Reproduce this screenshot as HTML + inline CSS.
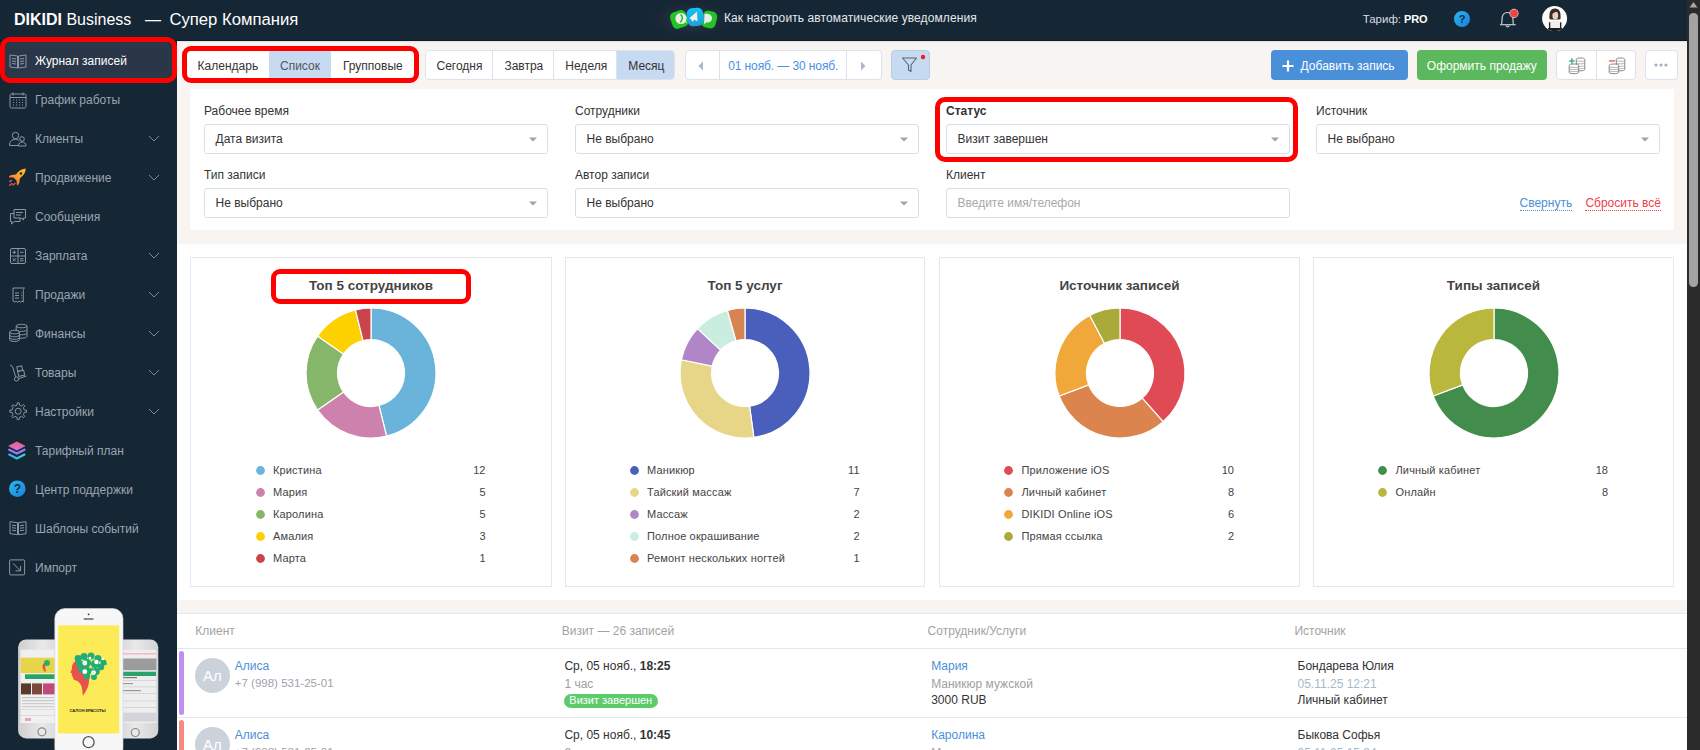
<!DOCTYPE html><html><head><meta charset="utf-8"><style>
html,body{margin:0;padding:0}
body{width:1700px;height:750px;overflow:hidden;position:relative;background:#f7f4f1;font-family:"Liberation Sans",sans-serif}
.t{position:absolute;white-space:nowrap}
.b{position:absolute;box-sizing:border-box}
svg{position:absolute;overflow:visible}
</style></head><body>
<div class="b" style="left:177px;top:41px;width:1510px;height:2px;background:linear-gradient(#e4e2e0,#f5f2ef)"></div>
<div class="b" style="left:0px;top:0px;width:1687px;height:41px;background:#152634;border-bottom:1px solid #0c1926"></div>
<div class="b" style="left:0px;top:41px;width:177px;height:709px;background:#152634"></div>
<div class="b" style="left:177px;top:244px;width:1510px;height:356px;background:#fefefe"></div>
<div class="b" style="left:177px;top:613px;width:1510px;height:137px;background:#fff;border-top:1px solid #e3e7ee"></div>
<div class="b" style="left:1687px;top:0px;width:13px;height:750px;background:#2b2b2b"></div>
<div class="b" style="left:1689.2px;top:13px;width:8.4px;height:274px;background:#a3a3a3;border-radius:4.2px"></div>
<svg style="left:1689px;top:0.5px" width="9" height="7"><path d="M0.5 6.5 L4.5 1 L8.5 6.5 Z" fill="#a8a8a8"/></svg>
<div class="t " style="left:14.00px;top:12.46px;font-size:16px;line-height:16px;color:#fff;font-weight:400;"><b>DIKIDI</b> Business</div>
<div class="t " style="left:145.00px;top:12.46px;font-size:16px;line-height:16px;color:#fff;font-weight:400;letter-spacing:0">—</div>
<div class="t " style="left:169.40px;top:11.86px;font-size:16.7px;line-height:16.7px;color:#fff;font-weight:400;">Супер Компания</div>
<svg style="left:620px;top:0px" width="140" height="40" viewBox="620 0 140 40">
<defs><radialGradient id="glow" cx="50%" cy="50%" r="50%"><stop offset="0" stop-color="#3a4654" stop-opacity="1"/><stop offset="1" stop-color="#172433" stop-opacity="0"/></radialGradient>
<linearGradient id="tg" x1="0" y1="0" x2="0" y2="1"><stop offset="0" stop-color="#12c2f8"/><stop offset="1" stop-color="#1f9fd8"/></linearGradient></defs>
<ellipse cx="692" cy="19" rx="46" ry="21" fill="url(#glow)"/>
<rect x="671" y="11" width="16.5" height="17" rx="5" fill="#22c322" transform="rotate(-18 679 19.5)"/>
<circle cx="681" cy="18.5" r="5.6" fill="#eeeeee"/><path d="M685 22 L687.3 23.3 L684.5 19.5 Z" fill="#eeeeee"/>
<path d="M681 15 C682.7 16 683 19.5 680.5 22" fill="none" stroke="#22c322" stroke-width="1.6" stroke-linecap="round"/>
<rect x="702" y="11" width="14.5" height="17" rx="5" fill="#22c322" transform="rotate(14 709 19.5)"/>
<path d="M704.5 14 C709 13 712 15 712 18.5 C712 21.5 709 23 706 22.5 L704 24.5 Z" fill="#ececec"/>
<rect x="687" y="8" width="16.5" height="18" rx="5.5" fill="url(#tg)" transform="rotate(-6 695 17)"/>
<path d="M689.5 18 L697 11.5 L697.5 21.5 L694 19.5 L693 22 Z" fill="#eeeeee"/>
</svg>
<div class="t " style="left:724.00px;top:11.84px;font-size:12px;line-height:12px;color:#e4e8ee;font-weight:400;letter-spacing:0.1px">Как настроить автоматические уведомления</div>
<div class="t " style="left:1362.70px;top:13.57px;font-size:11.5px;line-height:11.5px;color:#d9dde3;font-weight:400;">Тариф:</div>
<div class="t " style="left:1404.00px;top:13.99px;font-size:11px;line-height:11px;color:#fff;font-weight:700;letter-spacing:-0.1px">PRO</div>
<svg style="left:1454px;top:11px" width="16" height="16" viewBox="0 0 16 16">
<defs><linearGradient id="hq" x1="0" y1="0" x2="1" y2="1"><stop offset="0" stop-color="#2bb6f2"/><stop offset="1" stop-color="#1a7fd8"/></linearGradient></defs>
<circle cx="8" cy="8" r="8" fill="url(#hq)"/>
<text x="8" y="12.2" font-family="Liberation Sans" font-size="11" font-weight="700" text-anchor="middle" fill="#0d2a44">?</text></svg>
<svg style="left:1495px;top:4px" width="26" height="28" viewBox="1495 4 26 28">
<path d="M1500 24.7 H1515.7" stroke="#c5cbd3" stroke-width="1.2"/>
<path d="M1501.6 24.7 C1502.2 21 1501.8 18 1502.5 16 C1503.3 13.8 1505.5 12.5 1507.5 12.5 C1509.5 12.5 1511.7 13.8 1512.5 16 C1513.2 18 1512.8 21 1513.4 24.7" fill="none" stroke="#c5cbd3" stroke-width="1.2"/>
<path d="M1506 25.3 A1.6 1.6 0 0 0 1509.2 25.3" fill="none" stroke="#c5cbd3" stroke-width="1.1"/>
<circle cx="1514" cy="13.4" r="4.6" fill="#f2f2f2" fill-opacity="0.85"/>
<circle cx="1514" cy="13.4" r="3.9" fill="#f04545"/></svg>
<svg style="left:1540px;top:4px" width="30" height="30" viewBox="1540 4 30 30">
<defs><clipPath id="av"><circle cx="1554.6" cy="18.6" r="12.5"/></clipPath></defs>
<circle cx="1554.6" cy="18.6" r="12.5" fill="#fbfbfb"/>
<g clip-path="url(#av)">
<path d="M1549.5 19 C1549 13 1550 8.5 1555 8.5 C1559.5 8.5 1561 12 1560.5 19 L1559 19.5 L1551 19.5 Z" fill="#3b2c24"/>
<ellipse cx="1555.3" cy="15.5" rx="2.9" ry="4" fill="#e8cfc3"/>
<path d="M1551.5 12.5 C1553 9.5 1557.5 9.5 1559 12 L1557 11.3 L1552.5 13.5 Z" fill="#3b2c24"/>
<path d="M1547 31 L1547.5 22.5 C1549 21.5 1552 21 1555 21 C1558 21 1561 21.5 1562.5 22.5 L1563 31 Z" fill="#eeeeee"/>
<rect x="1549" y="22.3" width="1.3" height="9" fill="#222"/><rect x="1560" y="22.3" width="1.3" height="9" fill="#222"/>
<rect x="1548" y="28" width="14" height="4" fill="#1e1e1e"/>
</g></svg>
<div class="b" style="left:5px;top:42px;width:167px;height:36px;background:#2a3749;border-radius:6px"></div>
<div class="t " style="left:35.00px;top:54.84px;font-size:12px;line-height:12px;color:#ffffff;font-weight:400;">Журнал записей</div>
<div class="t " style="left:35.00px;top:93.84px;font-size:12px;line-height:12px;color:#9ba5b1;font-weight:400;">График работы</div>
<div class="t " style="left:35.00px;top:132.84px;font-size:12px;line-height:12px;color:#9ba5b1;font-weight:400;">Клиенты</div>
<svg style="left:148px;top:135px" width="12" height="7" viewBox="0 0 12 7"><path d="M1 1 L6 6 L11 1" fill="none" stroke="#7f8a96" stroke-width="1"/></svg>
<div class="t " style="left:35.00px;top:171.84px;font-size:12px;line-height:12px;color:#9ba5b1;font-weight:400;">Продвижение</div>
<svg style="left:148px;top:174px" width="12" height="7" viewBox="0 0 12 7"><path d="M1 1 L6 6 L11 1" fill="none" stroke="#7f8a96" stroke-width="1"/></svg>
<div class="t " style="left:35.00px;top:210.84px;font-size:12px;line-height:12px;color:#9ba5b1;font-weight:400;">Сообщения</div>
<div class="t " style="left:35.00px;top:249.84px;font-size:12px;line-height:12px;color:#9ba5b1;font-weight:400;">Зарплата</div>
<svg style="left:148px;top:252px" width="12" height="7" viewBox="0 0 12 7"><path d="M1 1 L6 6 L11 1" fill="none" stroke="#7f8a96" stroke-width="1"/></svg>
<div class="t " style="left:35.00px;top:288.84px;font-size:12px;line-height:12px;color:#9ba5b1;font-weight:400;">Продажи</div>
<svg style="left:148px;top:291px" width="12" height="7" viewBox="0 0 12 7"><path d="M1 1 L6 6 L11 1" fill="none" stroke="#7f8a96" stroke-width="1"/></svg>
<div class="t " style="left:35.00px;top:327.84px;font-size:12px;line-height:12px;color:#9ba5b1;font-weight:400;">Финансы</div>
<svg style="left:148px;top:330px" width="12" height="7" viewBox="0 0 12 7"><path d="M1 1 L6 6 L11 1" fill="none" stroke="#7f8a96" stroke-width="1"/></svg>
<div class="t " style="left:35.00px;top:366.84px;font-size:12px;line-height:12px;color:#9ba5b1;font-weight:400;">Товары</div>
<svg style="left:148px;top:369px" width="12" height="7" viewBox="0 0 12 7"><path d="M1 1 L6 6 L11 1" fill="none" stroke="#7f8a96" stroke-width="1"/></svg>
<div class="t " style="left:35.00px;top:405.84px;font-size:12px;line-height:12px;color:#9ba5b1;font-weight:400;">Настройки</div>
<svg style="left:148px;top:408px" width="12" height="7" viewBox="0 0 12 7"><path d="M1 1 L6 6 L11 1" fill="none" stroke="#7f8a96" stroke-width="1"/></svg>
<div class="t " style="left:35.00px;top:444.84px;font-size:12px;line-height:12px;color:#9ba5b1;font-weight:400;">Тарифный план</div>
<div class="t " style="left:35.00px;top:483.84px;font-size:12px;line-height:12px;color:#9ba5b1;font-weight:400;">Центр поддержки</div>
<div class="t " style="left:35.00px;top:522.84px;font-size:12px;line-height:12px;color:#9ba5b1;font-weight:400;">Шаблоны событий</div>
<div class="t " style="left:35.00px;top:561.84px;font-size:12px;line-height:12px;color:#9ba5b1;font-weight:400;">Импорт</div>
<svg style="left:8px;top:51px" width="20" height="20" viewBox="0 0 20 20"><path d="M2 4 L9.5 5 L9.5 17 L2 16 Z M18 4 L10.5 5 L10.5 17 L18 16 Z" fill="none" stroke="#8d97a3" stroke-width="1"/><path d="M4 7.5 L8 8 M4 10 L8 10.5 M4 12.5 L8 13 M12 8 L16 7.5 M12 10.5 L16 10 M12 13 L16 12.5" fill="none" stroke="#8d97a3" stroke-width="1"/></svg>
<svg style="left:8px;top:90px" width="20" height="20" viewBox="0 0 20 20"><rect x="2" y="4" width="16" height="14" rx="1.5" fill="none" stroke="#8d97a3" stroke-width="1"/><path d="M2 7.5 H18 M5 2.5 V5.5 M15 2.5 V5.5" fill="none" stroke="#8d97a3" stroke-width="1"/><path d="M5 10 h1 M8 10 h1 M11 10 h1 M14 10 h1 M5 12.5 h1 M8 12.5 h1 M11 12.5 h1 M14 12.5 h1 M5 15 h1 M8 15 h1 M11 15 h1 M14 15 h1" stroke="#8d97a3" stroke-width="1.2"/></svg>
<svg style="left:8px;top:129px" width="20" height="20" viewBox="0 0 20 20"><circle cx="7.5" cy="6.5" r="3.2" fill="none" stroke="#8d97a3" stroke-width="1"/><path d="M1.5 16.5 C1.5 12 4 10.5 7.5 10.5 C9.5 10.5 10.5 11 11.3 11.5 M1.5 16.5 H11" fill="none" stroke="#8d97a3" stroke-width="1"/><circle cx="14" cy="10" r="2.3" fill="none" stroke="#8d97a3" stroke-width="1"/><path d="M10.5 17 C10.5 14 12 13 14 13 C16 13 18 14 18 17 Z" fill="none" stroke="#8d97a3" stroke-width="1"/></svg>
<svg style="left:8px;top:168px" width="20" height="20" viewBox="0 0 20 20"><defs><linearGradient id="rk" x1="1" y1="0" x2="0.2" y2="1"><stop offset="0" stop-color="#ffc20e"/><stop offset="0.55" stop-color="#f9a030"/><stop offset="1" stop-color="#f0504a"/></linearGradient></defs><path d="M17.8 0.6 C13 1.2 10 3.5 8 6.5 L3.8 7 C2.2 7.3 1.2 8.2 0.8 9.5 L5.5 9.6 L8.6 12.8 L8.9 17.6 C10.2 17.2 11 16 11.3 14.6 L11.9 10.3 C15.2 8 17.6 5 17.8 0.6 Z" fill="url(#rk)"/><circle cx="12.9" cy="5.5" r="1.25" fill="#152634"/><path d="M1.6 13.6 L3.6 12.2 M1.6 17.2 L3.9 15.5 M4.9 17 L7 15.4" stroke="#e85a4a" stroke-width="1.3" stroke-linecap="round"/></svg>
<svg style="left:8px;top:207px" width="20" height="20" viewBox="0 0 20 20"><path d="M6 2.5 H17.5 V11 H15 L15.5 13 L13 11 H6 Z" fill="none" stroke="#8d97a3" stroke-width="1"/><path d="M8 5.5 H15 M8 8 H13" fill="none" stroke="#8d97a3" stroke-width="1"/><path d="M6 6.5 H2.5 V14.5 H4 L3.5 17 L6.5 14.5 H12 V11" fill="none" stroke="#8d97a3" stroke-width="1"/></svg>
<svg style="left:8px;top:246px" width="20" height="20" viewBox="0 0 20 20"><rect x="2.5" y="2.5" width="15" height="15" rx="1.5" fill="none" stroke="#8d97a3" stroke-width="1"/><path d="M10 2.5 V17.5 M2.5 10 H17.5" fill="none" stroke="#8d97a3" stroke-width="1"/><path d="M4.5 6.3 H8 M6.25 4.5 V8 M12 6.3 H15.5 M4.8 12.3 L7.8 15.3 M7.8 12.3 L4.8 15.3 M12 12.8 H15.5 M12 14.8 H15.5" fill="none" stroke="#8d97a3" stroke-width="1"/></svg>
<svg style="left:8px;top:285px" width="20" height="20" viewBox="0 0 20 20"><path d="M5 3 H16.5 C15.5 3.5 15.3 4.5 15.3 5.5 V17 L14 16 L12.5 17.2 L11 16 L9.5 17.2 L8 16 L6.5 17.2 L5 16 Z" fill="none" stroke="#8d97a3" stroke-width="1"/><path d="M7 8 H11 M7 10.5 H11 M7 13 H11 M13 8 h0.8 M13 10.5 h0.8 M13 13 h0.8" fill="none" stroke="#8d97a3" stroke-width="1"/></svg>
<svg style="left:8px;top:324px" width="20" height="20" viewBox="0 0 20 20"><path d="M8.2 2 C8.2 1 10.6 0.3 13.6 0.3 C16.6 0.3 19 1 19 2 V12.4 C19 13.4 16.6 14.2 13.6 14.2 C10.6 14.2 8.2 13.4 8.2 12.4 Z" fill="none" stroke="#8d97a3" stroke-width="1"/><path d="M8.2 2 C8.2 3 10.6 3.8 13.6 3.8 C16.6 3.8 19 3 19 2 M8.2 5.6 C8.2 6.6 10.6 7.4 13.6 7.4 C16.6 7.4 19 6.6 19 5.6 M8.2 9 C8.2 10 10.6 10.8 13.6 10.8 C16.6 10.8 19 10 19 9" fill="none" stroke="#8d97a3" stroke-width="1"/><path d="M1.6 8.1 C1.6 7.1 3.8 6.3 6.5 6.3 C9.2 6.3 11.4 7.1 11.4 8.1 V15.7 C11.4 16.7 9.2 17.5 6.5 17.5 C3.8 17.5 1.6 16.7 1.6 15.7 Z" fill="#152634" stroke="#8d97a3" stroke-width="1"/><path d="M1.6 8.1 C1.6 9.1 3.8 9.9 6.5 9.9 C9.2 9.9 11.4 9.1 11.4 8.1 M1.6 11 C1.6 12 3.8 12.8 6.5 12.8 C9.2 12.8 11.4 12 11.4 11 M1.6 13.6 C1.6 14.6 3.8 15.4 6.5 15.4 C9.2 15.4 11.4 14.6 11.4 13.6" fill="none" stroke="#8d97a3" stroke-width="1"/></svg>
<svg style="left:8px;top:363px" width="20" height="20" viewBox="0 0 20 20"><path d="M2 2 C3.5 2.2 4.5 3.5 5 5 L7.6 13.8" fill="none" stroke="#8d97a3" stroke-width="1"/><circle cx="8.5" cy="16" r="2.1" fill="none" stroke="#8d97a3" stroke-width="1"/><path d="M10.6 15.6 L18.5 13" fill="none" stroke="#8d97a3" stroke-width="1"/><rect x="9.2" y="3.3" width="5" height="4.6" transform="rotate(-12 11.7 5.6)" fill="none" stroke="#8d97a3" stroke-width="1"/><rect x="10.2" y="7.8" width="6" height="5" transform="rotate(-12 13.2 10.3)" fill="none" stroke="#8d97a3" stroke-width="1"/></svg>
<svg style="left:8px;top:402px" width="20" height="20" viewBox="0 0 20 20"><polygon points="16.29,8.02 18.54,8.18 18.54,10.22 16.29,10.38 15.34,12.67 16.82,14.37 15.37,15.82 13.67,14.34 11.38,15.29 11.22,17.54 9.18,17.54 9.02,15.29 6.73,14.34 5.03,15.82 3.58,14.37 5.06,12.67 4.11,10.38 1.86,10.22 1.86,8.18 4.11,8.02 5.06,5.73 3.58,4.03 5.03,2.58 6.73,4.06 9.02,3.11 9.18,0.86 11.22,0.86 11.38,3.11 13.67,4.06 15.37,2.58 16.82,4.03 15.34,5.73" fill="none" stroke="#8d97a3" stroke-width="1" stroke-linejoin="round"/><circle cx="10.2" cy="9.2" r="3" fill="none" stroke="#8d97a3" stroke-width="1"/></svg>
<svg style="left:8px;top:441px" width="20" height="20" viewBox="0 0 20 20"><defs><linearGradient id="lyr" x1="0" y1="0" x2="0" y2="1"><stop offset="0" stop-color="#ff5b6b"/><stop offset="1" stop-color="#b87ff5"/></linearGradient><linearGradient id="lyc" x1="0" y1="0" x2="1" y2="0"><stop offset="0" stop-color="#3aa8f0"/><stop offset="1" stop-color="#30d8d0"/></linearGradient></defs><path d="M8.85 0.8 L17 5 L8.85 9.2 L0.7 5 Z" fill="url(#lyr)" stroke="url(#lyr)" stroke-width="0.6" stroke-linejoin="round"/><path d="M1.2 8.7 L8.85 12.6 L16.5 8.7" fill="none" stroke="#9f7cf6" stroke-width="2.2" stroke-linecap="round" stroke-linejoin="round"/><path d="M1.2 13.6 L8.85 17.5 L16.5 13.6" fill="none" stroke="url(#lyc)" stroke-width="2.2" stroke-linecap="round" stroke-linejoin="round"/></svg>
<svg style="left:8px;top:480px" width="20" height="20" viewBox="0 0 20 20"><defs><linearGradient id="sp" x1="0" y1="0" x2="1" y2="1"><stop offset="0" stop-color="#2bbaf5"/><stop offset="1" stop-color="#1a80d8"/></linearGradient></defs><circle cx="9.3" cy="8.7" r="8.3" fill="url(#sp)"/><text x="9.3" y="13" font-family="Liberation Sans" font-size="12" font-weight="700" text-anchor="middle" fill="#0d2a44">?</text></svg>
<svg style="left:8px;top:519px" width="20" height="20" viewBox="0 0 20 20"><g transform="translate(0,-1.3)"><path d="M2 4 L9.5 5 L9.5 17 L2 16 Z M18 4 L10.5 5 L10.5 17 L18 16 Z" fill="none" stroke="#8d97a3" stroke-width="1"/><path d="M4 7.5 L8 8 M4 10 L8 10.5 M4 12.5 L8 13 M12 8 L16 7.5 M12 10.5 L16 10 M12 13 L16 12.5" fill="none" stroke="#8d97a3" stroke-width="1"/></g></svg>
<svg style="left:8px;top:558px" width="20" height="20" viewBox="0 0 20 20"><g transform="translate(-0.9,-0.6)"><rect x="2.5" y="2.5" width="15" height="15" rx="1" fill="none" stroke="#8d97a3" stroke-width="1"/><path d="M6 6 L13.5 13.5 M13.5 8.5 V13.5 H8.5" fill="none" stroke="#8d97a3" stroke-width="1"/></g></svg>
<div class="b" style="left:0px;top:37px;width:177px;height:46px;border:5px solid #ff0000;border-radius:10px"></div>
<svg style="left:15px;top:606px" width="150" height="144" viewBox="0 0 150 144">
<defs><linearGradient id="ph" x1="0" y1="0" x2="1" y2="0"><stop offset="0" stop-color="#cfcfd1"/><stop offset="0.5" stop-color="#e9e9ea"/><stop offset="1" stop-color="#d2d2d4"/></linearGradient></defs>
<rect x="3.1" y="33.4" width="48" height="99" rx="8" fill="url(#ph)"/>
<rect x="5.6" y="43.7" width="40" height="73.3" fill="#f0f0f0"/>
<rect x="5.6" y="51.7" width="40" height="15.4" fill="#e6d449"/>
<path d="M29 57 C27 59 27 62 29 65 L31 66 C30 62 30 59 31 57 Z" fill="#e0524a"/>
<circle cx="32" cy="57" r="3" fill="#2cae72"/>
<rect x="10" y="68.3" width="36" height="4.7" fill="#2aa36b"/>
<rect x="6" y="77.4" width="10" height="11" fill="#5a3a2a"/><rect x="17" y="77.4" width="10" height="11" fill="#7a4a3a"/><rect x="28" y="77.4" width="12" height="11" fill="#c04a7a"/>
<rect x="7" y="91" width="32" height="1.2" fill="#c8c8c8"/><rect x="7" y="94" width="32" height="1.2" fill="#c8c8c8"/><rect x="7" y="97" width="32" height="1.2" fill="#cdcdcd"/><rect x="7" y="100" width="32" height="1.2" fill="#cdcdcd"/>
<rect x="5.6" y="103" width="40" height="0.8" fill="#d8d8d8"/><rect x="5.6" y="109" width="40" height="0.8" fill="#d8d8d8"/>
<rect x="10" y="112" width="6" height="3" fill="#f0a0c0"/>
<circle cx="26.9" cy="125.8" r="4" fill="none" stroke="#8a8a8a" stroke-width="1.2"/>
<rect x="98" y="33.4" width="45.3" height="99" rx="8" fill="url(#ph)"/>
<rect x="104" y="43.7" width="37.4" height="73.3" fill="#eeeeee"/>
<rect x="104" y="47" width="37" height="1.5" fill="#f2b8c8"/>
<rect x="104" y="52.5" width="37.4" height="11.7" fill="#9c9c9c"/>
<rect x="104" y="65.7" width="37" height="4.3" fill="#2aa36b"/>
<rect x="104" y="74" width="37.4" height="0.8" fill="#d0d0d0"/><rect x="104" y="80.5" width="37.4" height="0.8" fill="#d0d0d0"/><rect x="104" y="87" width="37.4" height="0.8" fill="#d0d0d0"/><rect x="104" y="94.5" width="37.4" height="0.8" fill="#d0d0d0"/><rect x="104" y="101" width="37.4" height="0.8" fill="#d0d0d0"/>
<rect x="106" y="71" width="16" height="1.2" fill="#777"/><rect x="106" y="77" width="12" height="1.2" fill="#999"/><rect x="106" y="84" width="20" height="1.2" fill="#999"/>
<rect x="104" y="106.7" width="37.4" height="8.8" fill="#d3d3da"/>
<circle cx="120.3" cy="126.5" r="4" fill="none" stroke="#8a8a8a" stroke-width="1.2"/>
<rect x="39.8" y="2.5" width="68.2" height="150" rx="10" fill="#f7f7f7" stroke="#d5d5d5" stroke-width="0.6"/>
<rect x="43.1" y="19.3" width="61.1" height="108.2" fill="#fdea57"/>
<circle cx="73.6" cy="8.3" r="0.9" fill="#333"/><rect x="68.5" y="12.3" width="10.2" height="1.4" rx="0.7" fill="#666"/>
<circle cx="73.6" cy="136.2" r="5.5" fill="none" stroke="#555" stroke-width="1.3"/>
<path d="M60.5 55 C57.5 57 56.5 60 57 63 L55.3 66.6 L57 67.5 C56.5 69 57 70.5 58 71 C57.5 72.5 59 74 61 74.5 C64 75 66 78.5 67 82 L67.8 89.8 C70 87 72.5 83 73.5 79 L75 68 L70 56 Z" fill="#e8524d"/>
<g fill="#1fae79">
<circle cx="63" cy="52.5" r="3.4"/><circle cx="69" cy="50.5" r="3.6"/><circle cx="76" cy="50" r="3.5"/><circle cx="83" cy="52.5" r="3.5"/><circle cx="88.5" cy="56.5" r="3"/>
<circle cx="65" cy="58" r="3.8"/><circle cx="72" cy="57" r="4"/><circle cx="80" cy="58" r="4"/><circle cx="86" cy="61" r="3.2"/>
<circle cx="67" cy="64" r="3.6"/><circle cx="74" cy="64" r="4"/><circle cx="81" cy="65.5" r="3.8"/><circle cx="72" cy="70" r="3.2"/><circle cx="79" cy="71" r="3"/>
<circle cx="91" cy="58" r="1"/></g>
<g fill="#ffffff"><circle cx="69.8" cy="57" r="2.4"/><circle cx="81.4" cy="56" r="2.2"/><circle cx="69.8" cy="65.7" r="2.4"/><circle cx="78.5" cy="66.6" r="2.4"/><circle cx="88" cy="53" r="1.3"/><circle cx="75" cy="52" r="1.3"/></g>
<g fill="#f2df4a"><circle cx="75.5" cy="61" r="1.6"/><circle cx="69.8" cy="57" r="0.8"/><circle cx="78.5" cy="66.6" r="0.8"/></g>
<text x="72.6" y="106.3" font-family="Liberation Sans" font-size="4.3" font-weight="700" text-anchor="middle" fill="#2a2a2a" letter-spacing="-0.15">САЛОН КРАСОТЫ</text>
</svg>
<div class="b" style="left:185px;top:50px;width:232px;height:30px;background:#fff;border:1px solid #dde2ea;border-radius:4px"></div>
<div class="b" style="left:268.7px;top:51px;width:62.7px;height:28px;background:#c6daf2"></div>
<div class="t " style="left:197.60px;top:59.54px;font-size:12px;line-height:12px;color:#333;font-weight:400;">Календарь</div>
<div class="t " style="left:280.00px;top:59.54px;font-size:12px;line-height:12px;color:#555;font-weight:400;">Список</div>
<div class="t " style="left:343.00px;top:59.54px;font-size:12px;line-height:12px;color:#333;font-weight:400;">Групповые</div>
<div class="b" style="left:182px;top:46px;width:237px;height:37px;border:5px solid #ff0000;border-radius:9px"></div>
<div class="b" style="left:425px;top:50px;width:250px;height:30px;background:#fff;border:1px solid #dde2ea;border-radius:4px"></div>
<div class="b" style="left:616.5px;top:51px;width:57.5px;height:28px;background:#c6daf2;border-radius:0 3px 3px 0"></div>
<div class="b" style="left:492px;top:51px;width:1px;height:28px;background:#dde2ea"></div>
<div class="b" style="left:553px;top:51px;width:1px;height:28px;background:#dde2ea"></div>
<div class="b" style="left:616px;top:51px;width:1px;height:28px;background:#dde2ea"></div>
<div class="t " style="left:436.50px;top:59.54px;font-size:12px;line-height:12px;color:#333;font-weight:400;">Сегодня</div>
<div class="t " style="left:504.40px;top:59.54px;font-size:12px;line-height:12px;color:#333;font-weight:400;">Завтра</div>
<div class="t " style="left:565.30px;top:59.54px;font-size:12px;line-height:12px;color:#333;font-weight:400;">Неделя</div>
<div class="t " style="left:628.30px;top:59.54px;font-size:12px;line-height:12px;color:#333;font-weight:400;">Месяц</div>
<div class="b" style="left:684.5px;top:50px;width:197.5px;height:30px;background:#fff;border:1px solid #dde2ea;border-radius:4px"></div>
<div class="b" style="left:719px;top:51px;width:1px;height:28px;background:#dde2ea"></div>
<div class="b" style="left:846px;top:51px;width:1px;height:28px;background:#dde2ea"></div>
<svg style="left:698px;top:61px" width="6" height="10" viewBox="0 0 6 10"><path d="M5 0.5 L0.5 5 L5 9.5 Z" fill="#a8b8cc"/></svg>
<svg style="left:860px;top:61px" width="6" height="10" viewBox="0 0 6 10"><path d="M1 0.5 L5.5 5 L1 9.5 Z" fill="#a8b8cc"/></svg>
<div class="t " style="left:728.20px;top:59.54px;font-size:12px;line-height:12px;color:#4a90e2;font-weight:400;letter-spacing:-0.1px">01 нояб. — 30 нояб.</div>
<div class="b" style="left:891px;top:50px;width:39px;height:30px;background:#c6daf2;border:1px solid #b8cde6;border-radius:4px"></div>
<svg style="left:901px;top:56px" width="18" height="17" viewBox="0 0 18 17"><path d="M1.5 2 H15.5 L10 9 V15.5 L7.5 14 V9 Z" fill="none" stroke="#5a6575" stroke-width="1.1" stroke-linejoin="round"/></svg>
<svg style="left:920px;top:54px" width="6" height="6"><circle cx="3" cy="3" r="2.2" fill="#f01d1d"/></svg>
<div class="b" style="left:1270.5px;top:50px;width:137.5px;height:30px;background:#4a90d9;border-radius:4px"></div>
<svg style="left:1282px;top:60px" width="12" height="12" viewBox="0 0 12 12"><path d="M6 0.5 V11.5 M0.5 6 H11.5" stroke="#fff" stroke-width="2.2"/></svg>
<div class="t " style="left:1300.60px;top:59.54px;font-size:12px;line-height:12px;color:#fff;font-weight:400;">Добавить запись</div>
<div class="b" style="left:1416.5px;top:50px;width:130.5px;height:30px;background:#5cb85c;border-radius:4px"></div>
<div class="t " style="left:1426.80px;top:59.54px;font-size:12px;line-height:12px;color:#fff;font-weight:400;">Оформить продажу</div>
<div class="b" style="left:1556px;top:50px;width:80px;height:30px;background:#fff;border:1px solid #dde2ea;border-radius:4px"></div>
<div class="b" style="left:1595.5px;top:51px;width:1px;height:28px;background:#dde2ea"></div>
<svg style="left:1568px;top:57px" width="20" height="18" viewBox="0 0 20 18"><path d="M8.3 2.3 C8.3 1.4 10.3 1 12.6 1 C14.9 1 16.8 1.4 16.8 2.3 V12.5 C16.8 13.4 14.9 13.8 12.6 13.8 C10.3 13.8 8.3 13.4 8.3 12.5 Z" fill="#fff" stroke="#7a7a7a" stroke-width="0.9"/><path d="M8.3 3.8 C9.5 4.5 15.6 4.5 16.8 3.8 M8.3 6.3 C9.5 7 15.6 7 16.8 6.3 M8.3 8.8 C9.5 9.5 15.6 9.5 16.8 8.8 M8.3 11.2 C9.5 11.9 15.6 11.9 16.8 11.2" fill="none" stroke="#9a9a9a" stroke-width="0.7"/><path d="M1.2 8.3 C1.2 7.4 3.3 7 5.9 7 C8.5 7 10.6 7.4 10.6 8.3 V15.4 C10.6 16.3 8.5 16.7 5.9 16.7 C3.3 16.7 1.2 16.3 1.2 15.4 Z" fill="#fff" stroke="#7a7a7a" stroke-width="0.9"/><path d="M1.2 10 C2.4 10.7 9.4 10.7 10.6 10 M1.2 12 C2.4 12.7 9.4 12.7 10.6 12 M1.2 14 C2.4 14.7 9.4 14.7 10.6 14" fill="none" stroke="#9a9a9a" stroke-width="0.7"/><path d="M3.9 1.3 V6.9 M1.1 4.1 H6.7" stroke="#47b07a" stroke-width="1.5"/></svg>
<svg style="left:1608px;top:57px" width="20" height="18" viewBox="0 0 20 18"><path d="M8.3 2.3 C8.3 1.4 10.3 1 12.6 1 C14.9 1 16.8 1.4 16.8 2.3 V12.5 C16.8 13.4 14.9 13.8 12.6 13.8 C10.3 13.8 8.3 13.4 8.3 12.5 Z" fill="#fff" stroke="#7a7a7a" stroke-width="0.9"/><path d="M8.3 3.8 C9.5 4.5 15.6 4.5 16.8 3.8 M8.3 6.3 C9.5 7 15.6 7 16.8 6.3 M8.3 8.8 C9.5 9.5 15.6 9.5 16.8 8.8 M8.3 11.2 C9.5 11.9 15.6 11.9 16.8 11.2" fill="none" stroke="#9a9a9a" stroke-width="0.7"/><path d="M1.2 8.3 C1.2 7.4 3.3 7 5.9 7 C8.5 7 10.6 7.4 10.6 8.3 V15.4 C10.6 16.3 8.5 16.7 5.9 16.7 C3.3 16.7 1.2 16.3 1.2 15.4 Z" fill="#fff" stroke="#7a7a7a" stroke-width="0.9"/><path d="M1.2 10 C2.4 10.7 9.4 10.7 10.6 10 M1.2 12 C2.4 12.7 9.4 12.7 10.6 12 M1.2 14 C2.4 14.7 9.4 14.7 10.6 14" fill="none" stroke="#9a9a9a" stroke-width="0.7"/><path d="M0.9 3.9 H7.1" stroke="#f07373" stroke-width="1.6"/></svg>
<div class="b" style="left:1645px;top:50px;width:32.5px;height:30px;background:#fff;border:1px solid #dde2ea;border-radius:4px"></div>
<svg style="left:1653.5px;top:63px" width="4" height="4"><circle cx="2" cy="2" r="1.6" fill="#9db0c9"/></svg>
<svg style="left:1658.8px;top:63px" width="4" height="4"><circle cx="2" cy="2" r="1.6" fill="#9db0c9"/></svg>
<svg style="left:1664px;top:63px" width="4" height="4"><circle cx="2" cy="2" r="1.6" fill="#9db0c9"/></svg>
<div class="b" style="left:190px;top:89px;width:1484px;height:141px;background:#fff"></div>
<div class="t " style="left:204.00px;top:105.14px;font-size:12px;line-height:12px;color:#333;font-weight:400;">Рабочее время</div>
<div class="b" style="left:204px;top:124px;width:344px;height:30px;background:#fff;border:1px solid #d9dde4;border-radius:3px"></div>
<div class="t " style="left:215.50px;top:133.34px;font-size:12px;line-height:12px;color:#333;font-weight:400;">Дата визита</div>
<svg style="left:529px;top:137px" width="8" height="5" viewBox="0 0 8 5"><path d="M0 0.5 H8 L4 4.5 Z" fill="#9aa3ae"/></svg>
<div class="t " style="left:575.00px;top:105.14px;font-size:12px;line-height:12px;color:#333;font-weight:400;">Сотрудники</div>
<div class="b" style="left:575px;top:124px;width:344px;height:30px;background:#fff;border:1px solid #d9dde4;border-radius:3px"></div>
<div class="t " style="left:586.50px;top:133.34px;font-size:12px;line-height:12px;color:#333;font-weight:400;">Не выбрано</div>
<svg style="left:900px;top:137px" width="8" height="5" viewBox="0 0 8 5"><path d="M0 0.5 H8 L4 4.5 Z" fill="#9aa3ae"/></svg>
<div class="t " style="left:946.00px;top:105.14px;font-size:12px;line-height:12px;color:#333;font-weight:700;">Статус</div>
<div class="b" style="left:946px;top:124px;width:344px;height:30px;background:#fff;border:1px solid #d9dde4;border-radius:3px"></div>
<div class="t " style="left:957.50px;top:133.34px;font-size:12px;line-height:12px;color:#333;font-weight:400;">Визит завершен</div>
<svg style="left:1271px;top:137px" width="8" height="5" viewBox="0 0 8 5"><path d="M0 0.5 H8 L4 4.5 Z" fill="#9aa3ae"/></svg>
<div class="t " style="left:1316.00px;top:105.14px;font-size:12px;line-height:12px;color:#333;font-weight:400;">Источник</div>
<div class="b" style="left:1316px;top:124px;width:344px;height:30px;background:#fff;border:1px solid #d9dde4;border-radius:3px"></div>
<div class="t " style="left:1327.50px;top:133.34px;font-size:12px;line-height:12px;color:#333;font-weight:400;">Не выбрано</div>
<svg style="left:1641px;top:137px" width="8" height="5" viewBox="0 0 8 5"><path d="M0 0.5 H8 L4 4.5 Z" fill="#9aa3ae"/></svg>
<div class="t " style="left:204.00px;top:169.14px;font-size:12px;line-height:12px;color:#333;font-weight:400;">Тип записи</div>
<div class="b" style="left:204px;top:188px;width:344px;height:30px;background:#fff;border:1px solid #d9dde4;border-radius:3px"></div>
<div class="t " style="left:215.50px;top:197.34px;font-size:12px;line-height:12px;color:#333;font-weight:400;">Не выбрано</div>
<svg style="left:529px;top:201px" width="8" height="5" viewBox="0 0 8 5"><path d="M0 0.5 H8 L4 4.5 Z" fill="#9aa3ae"/></svg>
<div class="t " style="left:575.00px;top:169.14px;font-size:12px;line-height:12px;color:#333;font-weight:400;">Автор записи</div>
<div class="b" style="left:575px;top:188px;width:344px;height:30px;background:#fff;border:1px solid #d9dde4;border-radius:3px"></div>
<div class="t " style="left:586.50px;top:197.34px;font-size:12px;line-height:12px;color:#333;font-weight:400;">Не выбрано</div>
<svg style="left:900px;top:201px" width="8" height="5" viewBox="0 0 8 5"><path d="M0 0.5 H8 L4 4.5 Z" fill="#9aa3ae"/></svg>
<div class="t " style="left:946.00px;top:169.14px;font-size:12px;line-height:12px;color:#333;font-weight:400;">Клиент</div>
<div class="b" style="left:946px;top:188px;width:344px;height:30px;background:#fff;border:1px solid #d9dde4;border-radius:3px"></div>
<div class="t " style="left:957.50px;top:197.34px;font-size:12px;line-height:12px;color:#a9a9a9;font-weight:400;">Введите имя/телефон</div>
<div class="t " style="left:1519.50px;top:196.84px;font-size:12px;line-height:12px;color:#4a90d9;font-weight:400;border-bottom:1px dotted #4a90d9;padding-bottom:1px">Свернуть</div>
<div class="t " style="left:1585.40px;top:196.84px;font-size:12px;line-height:12px;color:#f0404a;font-weight:400;border-bottom:1px dotted #f0404a;padding-bottom:1px">Сбросить всё</div>
<div class="b" style="left:935px;top:97px;width:363px;height:65px;border:5px solid #ff0000;border-radius:10px"></div>
<div class="b" style="left:190px;top:257px;width:362px;height:330px;background:#fff;border:1px solid #e4e7ec"></div>
<div class="t" style="left:171.00px;width:400px;text-align:center;top:278.97px;font-size:13.5px;line-height:13.5px;color:#444;font-weight:700;">Топ 5 сотрудников</div>
<svg style="left:301.00px;top:303px" width="140" height="140" viewBox="301.00 303 140 140"><path d="M371.000 308.000 A65 65 0 0 1 386.556 436.111 L379.017 405.527 A33.5 33.5 0 0 0 371.000 339.500 Z" fill="#6ab4dc" stroke="#fff" stroke-width="1.2" stroke-linejoin="round"/><path d="M386.556 436.111 A65 65 0 0 1 317.506 409.924 L343.430 392.030 A33.5 33.5 0 0 0 379.017 405.527 Z" fill="#cd82ad" stroke="#fff" stroke-width="1.2" stroke-linejoin="round"/><path d="M317.506 409.924 A65 65 0 0 1 317.506 336.076 L343.430 353.970 A33.5 33.5 0 0 0 343.430 392.030 Z" fill="#86b66a" stroke="#fff" stroke-width="1.2" stroke-linejoin="round"/><path d="M317.506 336.076 A65 65 0 0 1 355.444 309.889 L362.983 340.473 A33.5 33.5 0 0 0 343.430 353.970 Z" fill="#fdd000" stroke="#fff" stroke-width="1.2" stroke-linejoin="round"/><path d="M355.444 309.889 A65 65 0 0 1 371.000 308.000 L371.000 339.500 A33.5 33.5 0 0 0 362.983 340.473 Z" fill="#c9454b" stroke="#fff" stroke-width="1.2" stroke-linejoin="round"/></svg>
<svg style="left:255.50px;top:466.30px" width="9" height="9"><circle cx="4.5" cy="4.5" r="4.4" fill="#6ab4dc"/></svg>
<div class="t " style="left:273.00px;top:465.19px;font-size:11px;line-height:11px;color:#444;font-weight:400;letter-spacing:0.15px">Кристина</div>
<div class="t" style="left:185.50px;width:300px;text-align:right;top:465.19px;font-size:11px;line-height:11px;color:#444;font-weight:400;">12</div>
<svg style="left:255.50px;top:488.30px" width="9" height="9"><circle cx="4.5" cy="4.5" r="4.4" fill="#cd82ad"/></svg>
<div class="t " style="left:273.00px;top:487.19px;font-size:11px;line-height:11px;color:#444;font-weight:400;letter-spacing:0.15px">Мария</div>
<div class="t" style="left:185.50px;width:300px;text-align:right;top:487.19px;font-size:11px;line-height:11px;color:#444;font-weight:400;">5</div>
<svg style="left:255.50px;top:510.30px" width="9" height="9"><circle cx="4.5" cy="4.5" r="4.4" fill="#86b66a"/></svg>
<div class="t " style="left:273.00px;top:509.19px;font-size:11px;line-height:11px;color:#444;font-weight:400;letter-spacing:0.15px">Каролина</div>
<div class="t" style="left:185.50px;width:300px;text-align:right;top:509.19px;font-size:11px;line-height:11px;color:#444;font-weight:400;">5</div>
<svg style="left:255.50px;top:532.30px" width="9" height="9"><circle cx="4.5" cy="4.5" r="4.4" fill="#fdd000"/></svg>
<div class="t " style="left:273.00px;top:531.19px;font-size:11px;line-height:11px;color:#444;font-weight:400;letter-spacing:0.15px">Амалия</div>
<div class="t" style="left:185.50px;width:300px;text-align:right;top:531.19px;font-size:11px;line-height:11px;color:#444;font-weight:400;">3</div>
<svg style="left:255.50px;top:554.30px" width="9" height="9"><circle cx="4.5" cy="4.5" r="4.4" fill="#c9454b"/></svg>
<div class="t " style="left:273.00px;top:553.19px;font-size:11px;line-height:11px;color:#444;font-weight:400;letter-spacing:0.15px">Марта</div>
<div class="t" style="left:185.50px;width:300px;text-align:right;top:553.19px;font-size:11px;line-height:11px;color:#444;font-weight:400;">1</div>
<div class="b" style="left:565px;top:257px;width:360px;height:330px;background:#fff;border:1px solid #e4e7ec"></div>
<div class="t" style="left:545.00px;width:400px;text-align:center;top:278.97px;font-size:13.5px;line-height:13.5px;color:#444;font-weight:700;">Топ 5 услуг</div>
<svg style="left:675.00px;top:303px" width="140" height="140" viewBox="675.00 303 140 140"><path d="M745.000 308.000 A65 65 0 0 1 753.851 437.395 L749.562 406.188 A33.5 33.5 0 0 0 745.000 339.500 Z" fill="#4a5fbc" stroke="#fff" stroke-width="1.2" stroke-linejoin="round"/><path d="M753.851 437.395 A65 65 0 0 1 681.360 359.775 L712.201 366.184 A33.5 33.5 0 0 0 749.562 406.188 Z" fill="#e8d688" stroke="#fff" stroke-width="1.2" stroke-linejoin="round"/><path d="M681.360 359.775 A65 65 0 0 1 697.496 328.634 L720.517 350.134 A33.5 33.5 0 0 0 712.201 366.184 Z" fill="#b086c8" stroke="#fff" stroke-width="1.2" stroke-linejoin="round"/><path d="M697.496 328.634 A65 65 0 0 1 727.463 310.410 L735.962 340.742 A33.5 33.5 0 0 0 720.517 350.134 Z" fill="#c9eedf" stroke="#fff" stroke-width="1.2" stroke-linejoin="round"/><path d="M727.463 310.410 A65 65 0 0 1 745.000 308.000 L745.000 339.500 A33.5 33.5 0 0 0 735.962 340.742 Z" fill="#d88352" stroke="#fff" stroke-width="1.2" stroke-linejoin="round"/></svg>
<svg style="left:629.50px;top:466.30px" width="9" height="9"><circle cx="4.5" cy="4.5" r="4.4" fill="#4a5fbc"/></svg>
<div class="t " style="left:647.00px;top:465.19px;font-size:11px;line-height:11px;color:#444;font-weight:400;letter-spacing:0.15px">Маникюр</div>
<div class="t" style="left:559.50px;width:300px;text-align:right;top:465.19px;font-size:11px;line-height:11px;color:#444;font-weight:400;">11</div>
<svg style="left:629.50px;top:488.30px" width="9" height="9"><circle cx="4.5" cy="4.5" r="4.4" fill="#e8d688"/></svg>
<div class="t " style="left:647.00px;top:487.19px;font-size:11px;line-height:11px;color:#444;font-weight:400;letter-spacing:0.15px">Тайский массаж</div>
<div class="t" style="left:559.50px;width:300px;text-align:right;top:487.19px;font-size:11px;line-height:11px;color:#444;font-weight:400;">7</div>
<svg style="left:629.50px;top:510.30px" width="9" height="9"><circle cx="4.5" cy="4.5" r="4.4" fill="#b086c8"/></svg>
<div class="t " style="left:647.00px;top:509.19px;font-size:11px;line-height:11px;color:#444;font-weight:400;letter-spacing:0.15px">Массаж</div>
<div class="t" style="left:559.50px;width:300px;text-align:right;top:509.19px;font-size:11px;line-height:11px;color:#444;font-weight:400;">2</div>
<svg style="left:629.50px;top:532.30px" width="9" height="9"><circle cx="4.5" cy="4.5" r="4.4" fill="#c9eedf"/></svg>
<div class="t " style="left:647.00px;top:531.19px;font-size:11px;line-height:11px;color:#444;font-weight:400;letter-spacing:0.15px">Полное окрашивание</div>
<div class="t" style="left:559.50px;width:300px;text-align:right;top:531.19px;font-size:11px;line-height:11px;color:#444;font-weight:400;">2</div>
<svg style="left:629.50px;top:554.30px" width="9" height="9"><circle cx="4.5" cy="4.5" r="4.4" fill="#d88352"/></svg>
<div class="t " style="left:647.00px;top:553.19px;font-size:11px;line-height:11px;color:#444;font-weight:400;letter-spacing:0.15px">Ремонт нескольких ногтей</div>
<div class="t" style="left:559.50px;width:300px;text-align:right;top:553.19px;font-size:11px;line-height:11px;color:#444;font-weight:400;">1</div>
<div class="b" style="left:939px;top:257px;width:361px;height:330px;background:#fff;border:1px solid #e4e7ec"></div>
<div class="t" style="left:919.50px;width:400px;text-align:center;top:278.97px;font-size:13.5px;line-height:13.5px;color:#444;font-weight:700;">Источник записей</div>
<svg style="left:1049.50px;top:303px" width="140" height="140" viewBox="1049.50 303 140 140"><path d="M1119.500 308.000 A65 65 0 0 1 1162.603 421.653 L1141.715 398.075 A33.5 33.5 0 0 0 1119.500 339.500 Z" fill="#e04a54" stroke="#fff" stroke-width="1.2" stroke-linejoin="round"/><path d="M1162.603 421.653 A65 65 0 0 1 1058.724 396.049 L1088.177 384.879 A33.5 33.5 0 0 0 1141.715 398.075 Z" fill="#dc844e" stroke="#fff" stroke-width="1.2" stroke-linejoin="round"/><path d="M1058.724 396.049 A65 65 0 0 1 1089.293 315.445 L1103.932 343.337 A33.5 33.5 0 0 0 1088.177 384.879 Z" fill="#f0a83a" stroke="#fff" stroke-width="1.2" stroke-linejoin="round"/><path d="M1089.293 315.445 A65 65 0 0 1 1119.500 308.000 L1119.500 339.500 A33.5 33.5 0 0 0 1103.932 343.337 Z" fill="#a9aa3a" stroke="#fff" stroke-width="1.2" stroke-linejoin="round"/></svg>
<svg style="left:1004.00px;top:466.30px" width="9" height="9"><circle cx="4.5" cy="4.5" r="4.4" fill="#e04a54"/></svg>
<div class="t " style="left:1021.50px;top:465.19px;font-size:11px;line-height:11px;color:#444;font-weight:400;letter-spacing:0.15px">Приложение iOS</div>
<div class="t" style="left:934.00px;width:300px;text-align:right;top:465.19px;font-size:11px;line-height:11px;color:#444;font-weight:400;">10</div>
<svg style="left:1004.00px;top:488.30px" width="9" height="9"><circle cx="4.5" cy="4.5" r="4.4" fill="#dc844e"/></svg>
<div class="t " style="left:1021.50px;top:487.19px;font-size:11px;line-height:11px;color:#444;font-weight:400;letter-spacing:0.15px">Личный кабинет</div>
<div class="t" style="left:934.00px;width:300px;text-align:right;top:487.19px;font-size:11px;line-height:11px;color:#444;font-weight:400;">8</div>
<svg style="left:1004.00px;top:510.30px" width="9" height="9"><circle cx="4.5" cy="4.5" r="4.4" fill="#f0a83a"/></svg>
<div class="t " style="left:1021.50px;top:509.19px;font-size:11px;line-height:11px;color:#444;font-weight:400;letter-spacing:0.15px">DIKIDI Online iOS</div>
<div class="t" style="left:934.00px;width:300px;text-align:right;top:509.19px;font-size:11px;line-height:11px;color:#444;font-weight:400;">6</div>
<svg style="left:1004.00px;top:532.30px" width="9" height="9"><circle cx="4.5" cy="4.5" r="4.4" fill="#a9aa3a"/></svg>
<div class="t " style="left:1021.50px;top:531.19px;font-size:11px;line-height:11px;color:#444;font-weight:400;letter-spacing:0.15px">Прямая ссылка</div>
<div class="t" style="left:934.00px;width:300px;text-align:right;top:531.19px;font-size:11px;line-height:11px;color:#444;font-weight:400;">2</div>
<div class="b" style="left:1313px;top:257px;width:361px;height:330px;background:#fff;border:1px solid #e4e7ec"></div>
<div class="t" style="left:1293.50px;width:400px;text-align:center;top:278.97px;font-size:13.5px;line-height:13.5px;color:#444;font-weight:700;">Типы записей</div>
<svg style="left:1423.50px;top:303px" width="140" height="140" viewBox="1423.50 303 140 140"><path d="M1493.500 308.000 A65 65 0 1 1 1432.724 396.049 L1462.177 384.879 A33.5 33.5 0 1 0 1493.500 339.500 Z" fill="#438d4c" stroke="#fff" stroke-width="1.2" stroke-linejoin="round"/><path d="M1432.724 396.049 A65 65 0 0 1 1493.500 308.000 L1493.500 339.500 A33.5 33.5 0 0 0 1462.177 384.879 Z" fill="#b9b73c" stroke="#fff" stroke-width="1.2" stroke-linejoin="round"/></svg>
<svg style="left:1378.00px;top:466.30px" width="9" height="9"><circle cx="4.5" cy="4.5" r="4.4" fill="#438d4c"/></svg>
<div class="t " style="left:1395.50px;top:465.19px;font-size:11px;line-height:11px;color:#444;font-weight:400;letter-spacing:0.15px">Личный кабинет</div>
<div class="t" style="left:1308.00px;width:300px;text-align:right;top:465.19px;font-size:11px;line-height:11px;color:#444;font-weight:400;">18</div>
<svg style="left:1378.00px;top:488.30px" width="9" height="9"><circle cx="4.5" cy="4.5" r="4.4" fill="#b9b73c"/></svg>
<div class="t " style="left:1395.50px;top:487.19px;font-size:11px;line-height:11px;color:#444;font-weight:400;letter-spacing:0.15px">Онлайн</div>
<div class="t" style="left:1308.00px;width:300px;text-align:right;top:487.19px;font-size:11px;line-height:11px;color:#444;font-weight:400;">8</div>
<div class="b" style="left:271px;top:269px;width:200px;height:35px;border:5px solid #ff0000;border-radius:9px"></div>
<div class="t " style="left:195.30px;top:624.84px;font-size:12px;line-height:12px;color:#a3a3a3;font-weight:400;">Клиент</div>
<div class="t " style="left:561.70px;top:624.84px;font-size:12px;line-height:12px;color:#a3a3a3;font-weight:400;">Визит — 26 записей</div>
<div class="t " style="left:927.60px;top:624.84px;font-size:12px;line-height:12px;color:#a3a3a3;font-weight:400;">Сотрудник/Услуги</div>
<div class="t " style="left:1294.40px;top:624.84px;font-size:12px;line-height:12px;color:#a3a3a3;font-weight:400;">Источник</div>
<div class="b" style="left:177px;top:648px;width:1510px;height:1px;background:#e3e7ee"></div>
<div class="b" style="left:177px;top:717px;width:1510px;height:1px;background:#e6e9ee"></div>
<div class="b" style="left:179px;top:650.5px;width:5px;height:64px;background:#bf8ff0;border-radius:3px"></div>
<svg style="left:195px;top:657.7px" width="35" height="35"><circle cx="17.5" cy="17.5" r="17.5" fill="#ccd2da"/><text x="17.5" y="23" font-family="Liberation Sans" font-size="15" text-anchor="middle" fill="#fff">Ал</text></svg>
<div class="t " style="left:234.80px;top:659.54px;font-size:12px;line-height:12px;color:#4a90d9;font-weight:400;">Алиса</div>
<div class="t " style="left:234.80px;top:678.27px;font-size:11.5px;line-height:11.5px;color:#9ea4ac;font-weight:400;">+7 (998) 531-25-01</div>
<div class="t " style="left:564.40px;top:659.54px;font-size:12px;line-height:12px;color:#333;font-weight:400;">Ср, 05 нояб., <b>18:25</b></div>
<div class="t " style="left:564.40px;top:677.84px;font-size:12px;line-height:12px;color:#a0a0a0;font-weight:400;">1 час</div>
<div class="b" style="left:564px;top:693.7px;width:94px;height:14.5px;background:#5ccc6a;border-radius:7px"></div>
<div class="t " style="left:569.30px;top:695.19px;font-size:11px;line-height:11px;color:#fff;font-weight:400;">Визит завершен</div>
<div class="t " style="left:931.20px;top:659.64px;font-size:12px;line-height:12px;color:#4a90d9;font-weight:400;">Мария</div>
<div class="t " style="left:931.20px;top:677.84px;font-size:12px;line-height:12px;color:#a0a0a0;font-weight:400;">Маникюр мужской</div>
<div class="t " style="left:931.20px;top:694.44px;font-size:12px;line-height:12px;color:#333;font-weight:400;">3000 RUB</div>
<div class="t " style="left:1297.50px;top:659.64px;font-size:12px;line-height:12px;color:#333;font-weight:400;">Бондарева Юлия</div>
<div class="t " style="left:1297.50px;top:677.84px;font-size:12px;line-height:12px;color:#a8b8cc;font-weight:400;">05.11.25 12:21</div>
<div class="t " style="left:1297.50px;top:694.44px;font-size:12px;line-height:12px;color:#333;font-weight:400;">Личный кабинет</div>
<div class="b" style="left:179px;top:719.5px;width:5px;height:64px;background:#f78a80;border-radius:3px"></div>
<svg style="left:195px;top:726.7px" width="35" height="35"><circle cx="17.5" cy="17.5" r="17.5" fill="#ccd2da"/><text x="17.5" y="23" font-family="Liberation Sans" font-size="15" text-anchor="middle" fill="#fff">Ал</text></svg>
<div class="t " style="left:234.80px;top:728.54px;font-size:12px;line-height:12px;color:#4a90d9;font-weight:400;">Алиса</div>
<div class="t " style="left:234.80px;top:747.27px;font-size:11.5px;line-height:11.5px;color:#9ea4ac;font-weight:400;">+7 (998) 531-25-01</div>
<div class="t " style="left:564.40px;top:728.54px;font-size:12px;line-height:12px;color:#333;font-weight:400;">Ср, 05 нояб., <b>10:45</b></div>
<div class="t " style="left:564.40px;top:746.84px;font-size:12px;line-height:12px;color:#a0a0a0;font-weight:400;">2 часа</div>
<div class="b" style="left:564px;top:762.7px;width:94px;height:14.5px;background:#5ccc6a;border-radius:7px"></div>
<div class="t " style="left:569.30px;top:764.19px;font-size:11px;line-height:11px;color:#fff;font-weight:400;">Визит завершен</div>
<div class="t " style="left:931.20px;top:728.64px;font-size:12px;line-height:12px;color:#4a90d9;font-weight:400;">Каролина</div>
<div class="t " style="left:931.20px;top:746.84px;font-size:12px;line-height:12px;color:#a0a0a0;font-weight:400;">Маникюр</div>
<div class="t " style="left:931.20px;top:763.44px;font-size:12px;line-height:12px;color:#333;font-weight:400;">2500 RUB</div>
<div class="t " style="left:1297.50px;top:728.64px;font-size:12px;line-height:12px;color:#333;font-weight:400;">Быкова Софья</div>
<div class="t " style="left:1297.50px;top:746.84px;font-size:12px;line-height:12px;color:#a8b8cc;font-weight:400;">05.11.25 15:24</div>
<div class="t " style="left:1297.50px;top:763.44px;font-size:12px;line-height:12px;color:#333;font-weight:400;">Личный кабинет</div>
</body></html>
